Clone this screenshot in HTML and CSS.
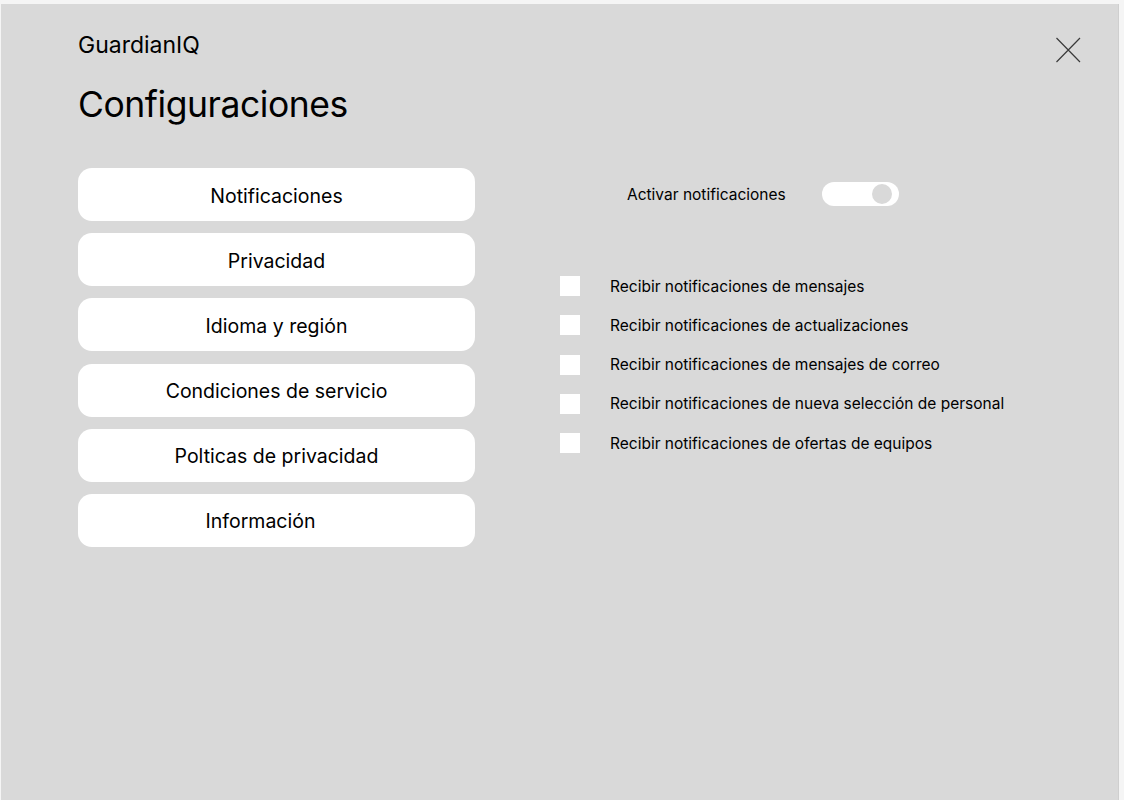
FILE: index.html
```html
<!DOCTYPE html>
<html lang="es">
<head>
<meta charset="utf-8">
<title>GuardianIQ - Configuraciones</title>
<link rel="stylesheet" href="styles.css">
</head>
<body>
<div class="frame">
  <header class="header">
    <div class="titles">
      <div class="brand">GuardianIQ</div>
      <h1 class="title">Configuraciones</h1>
    </div>
    <button class="close" aria-label="Cerrar">
      <svg width="26" height="26" viewBox="0 0 26 26"><path d="M1.5 1 L25 25 M25 1 L1.5 25" stroke="#3a3a3a" stroke-width="1.2" fill="none"/></svg>
    </button>
  </header>
  <main class="content">
    <nav class="menu">
      <a class="menu-item">Notificaciones</a>
      <a class="menu-item">Privacidad</a>
      <a class="menu-item">Idioma y región</a>
      <a class="menu-item">Condiciones de servicio</a>
      <a class="menu-item">Polticas de privacidad</a>
      <a class="menu-item menu-item-off">Información</a>
    </nav>
    <section class="panel">
      <div class="toggle-row">
        <span class="toggle-label">Activar notificaciones</span>
        <span class="toggle"><span class="knob"></span></span>
      </div>
      <ul class="checks">
        <li class="check"><span class="box"></span><span>Recibir notificaciones de mensajes</span></li>
        <li class="check"><span class="box"></span><span>Recibir notificaciones de actualizaciones</span></li>
        <li class="check"><span class="box"></span><span>Recibir notificaciones de mensajes de correo</span></li>
        <li class="check"><span class="box"></span><span>Recibir notificaciones de nueva selección de personal</span></li>
        <li class="check"><span class="box"></span><span>Recibir notificaciones de ofertas de equipos</span></li>
      </ul>
    </section>
  </main>
</div>
</body>
</html>
```

FILE: styles.css
```css
html, body {
  margin: 0;
  padding: 0;
  background: #f5f5f5;
  font-family: Inter, "Noto Sans", sans-serif;
  color: #000;
}
.frame {
  margin: 4px 0 0 1px;
  width: 1118px;
  height: 796px;
  background: #d9d9d9;
  border-right: 1px solid #cfcfcf;
  box-sizing: border-box;
  padding: 27px 0 0 77px;
}
.header {
  display: flex;
  justify-content: space-between;
  align-items: flex-start;
  padding-right: 37px;
}
.brand {
  font-size: 23px;
  line-height: 28px;
}
.title {
  margin: 24px 0 0;
  font-size: 35.5px;
  letter-spacing: -0.45px;
  font-weight: 400;
  line-height: 44px;
}
.close {
  margin-top: 6px;
  padding: 0;
  border: 0;
  background: none;
  width: 26px;
  height: 26px;
  display: block;
}
.close svg { display: block; }
.content {
  display: flex;
  margin-top: 41px;
  gap: 85px;
}
.menu {
  width: 397px;
  display: flex;
  flex-direction: column;
  gap: 12.2px;
}
.menu-item {
  height: 53px;
  background: #fff;
  border-radius: 14px;
  display: flex;
  align-items: center;
  justify-content: center;
  font-size: 19.5px;
  padding-top: 2px;
  box-sizing: border-box;
}
.menu-item-off { padding-right: 32px; }
.panel {
  padding-top: 14px;
}
.toggle-row {
  display: flex;
  align-items: center;
  height: 24px;
  padding-left: 67px;
}
.toggle-label {
  font-size: 15.5px;
  width: 195px;
}
.toggle {
  width: 77px;
  height: 24px;
  border-radius: 12px;
  background: #fff;
  display: flex;
  align-items: center;
  justify-content: flex-end;
  padding-right: 7px;
  box-sizing: border-box;
}
.knob {
  width: 20px;
  height: 20px;
  border-radius: 50%;
  background: #d9d9d9;
}
.checks {
  list-style: none;
  margin: 70px 0 0;
  padding: 0;
  display: flex;
  flex-direction: column;
  gap: 19.25px;
}
.check {
  display: flex;
  align-items: center;
  height: 20px;
  gap: 30px;
  font-size: 15.5px;
}
.box {
  width: 20px;
  height: 20px;
  background: #fff;
  flex: none;
}
```
